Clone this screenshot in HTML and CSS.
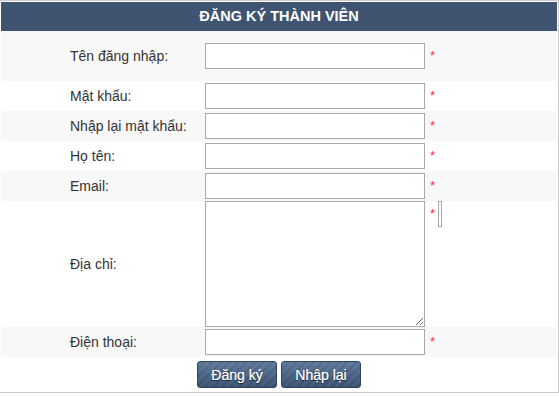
FILE: index.html
```html
<!DOCTYPE html>
<html lang="vi">
<head>
    <meta charset="UTF-8">
    <title>Đăng ký thành viên</title>
    <link rel="stylesheet" href="styles.css">
</head>
<body>
    <div class="register-box">
        <div class="header">ĐĂNG KÝ THÀNH VIÊN</div>

        <form class="register-form">
            <div class="row row-first alt">
                <label>Tên đăng nhập:</label>
                <input type="text">
                <span class="req">*</span>
            </div>
            <div class="row">
                <label>Mật khẩu:</label>
                <input type="password">
                <span class="req">*</span>
            </div>
            <div class="row alt">
                <label>Nhập lại mật khẩu:</label>
                <input type="password">
                <span class="req">*</span>
            </div>
            <div class="row">
                <label>Họ tên:</label>
                <input type="text">
                <span class="req">*</span>
            </div>
            <div class="row alt">
                <label>Email:</label>
                <input type="text">
                <span class="req">*</span>
            </div>
            <div class="row row-area">
                <label>Địa chỉ:</label>
                <textarea></textarea>
                <span class="req-top">
                    <span class="req">*</span>
                    <span class="error-box"></span>
                </span>
            </div>
            <div class="row alt">
                <label>Điện thoại:</label>
                <input type="text">
                <span class="req">*</span>
            </div>
            <div class="actions">
                <button type="button" class="btn">Đăng ký</button>
                <button type="reset" class="btn">Nhập lại</button>
            </div>
        </form>
    </div>
</body>
</html>
```

FILE: styles.css
```css
body {
    margin: 0;
    padding: 0;
    font-family: Arial, "Liberation Sans", sans-serif;
    font-size: 14px;
    color: #333;
    background: #fff;
}

.register-box {
    width: 560px;
    margin-left: -1px;
    padding: 1px;
    border: 1px solid #ccc;
    box-sizing: border-box;
    height: 393px;
}

.header {
    height: 29px;
    line-height: 29px;
    background-color: #3f5471;
    color: #fff;
    font-weight: bold;
    font-size: 14.5px;
    text-align: center;
}

.register-form {
    margin: 0;
}

.row {
    display: grid;
    grid-template-columns: 204px 220px auto;
    align-items: center;
    height: 30px;
    background-color: #fff;
}

.row.alt {
    background-color: #f8f8f8;
}

.row-first {
    height: 50px;
}

.row-area {
    height: 126px;
}

.row label {
    padding-left: 69px;
}

.row input {
    width: 220px;
    height: 26px;
    box-sizing: border-box;
    margin: 0;
    border: 1px solid #a9a9a9;
    background: #fff;
}

.row textarea {
    width: 220px;
    height: 126px;
    box-sizing: border-box;
    margin: 0;
    border: 1px solid #a9a9a9;
    resize: both;
}

.req {
    color: #f33;
    font-size: 13px;
    padding-left: 5px;
    position: relative;
    top: -1px;
}

.req-top {
    align-self: start;
    display: flex;
    align-items: flex-start;
}

.req-top .req {
    top: 5px;
}

.error-box {
    display: inline-block;
    width: 2px;
    height: 24px;
    margin-left: 3px;
    border: 1px solid #aaa;
}

.actions {
    display: flex;
    justify-content: center;
    gap: 4px;
    padding-top: 4px;
}

.btn {
    width: 80px;
    height: 27px;
    padding: 0;
    border: 1px solid #2f4461;
    border-radius: 3px;
    color: #fff;
    font-family: Arial, "Liberation Sans", sans-serif;
    font-size: 14px;
    text-shadow: 0 1px 1px rgba(0, 0, 0, 0.6), 0 0 0.4px #fff;
    background:
        repeating-linear-gradient(135deg, rgba(255, 255, 255, 0.04) 0 3px, rgba(0, 0, 0, 0.04) 3px 6px),
        linear-gradient(to bottom, #5d7799, #3a5273);
    cursor: pointer;
}
```
